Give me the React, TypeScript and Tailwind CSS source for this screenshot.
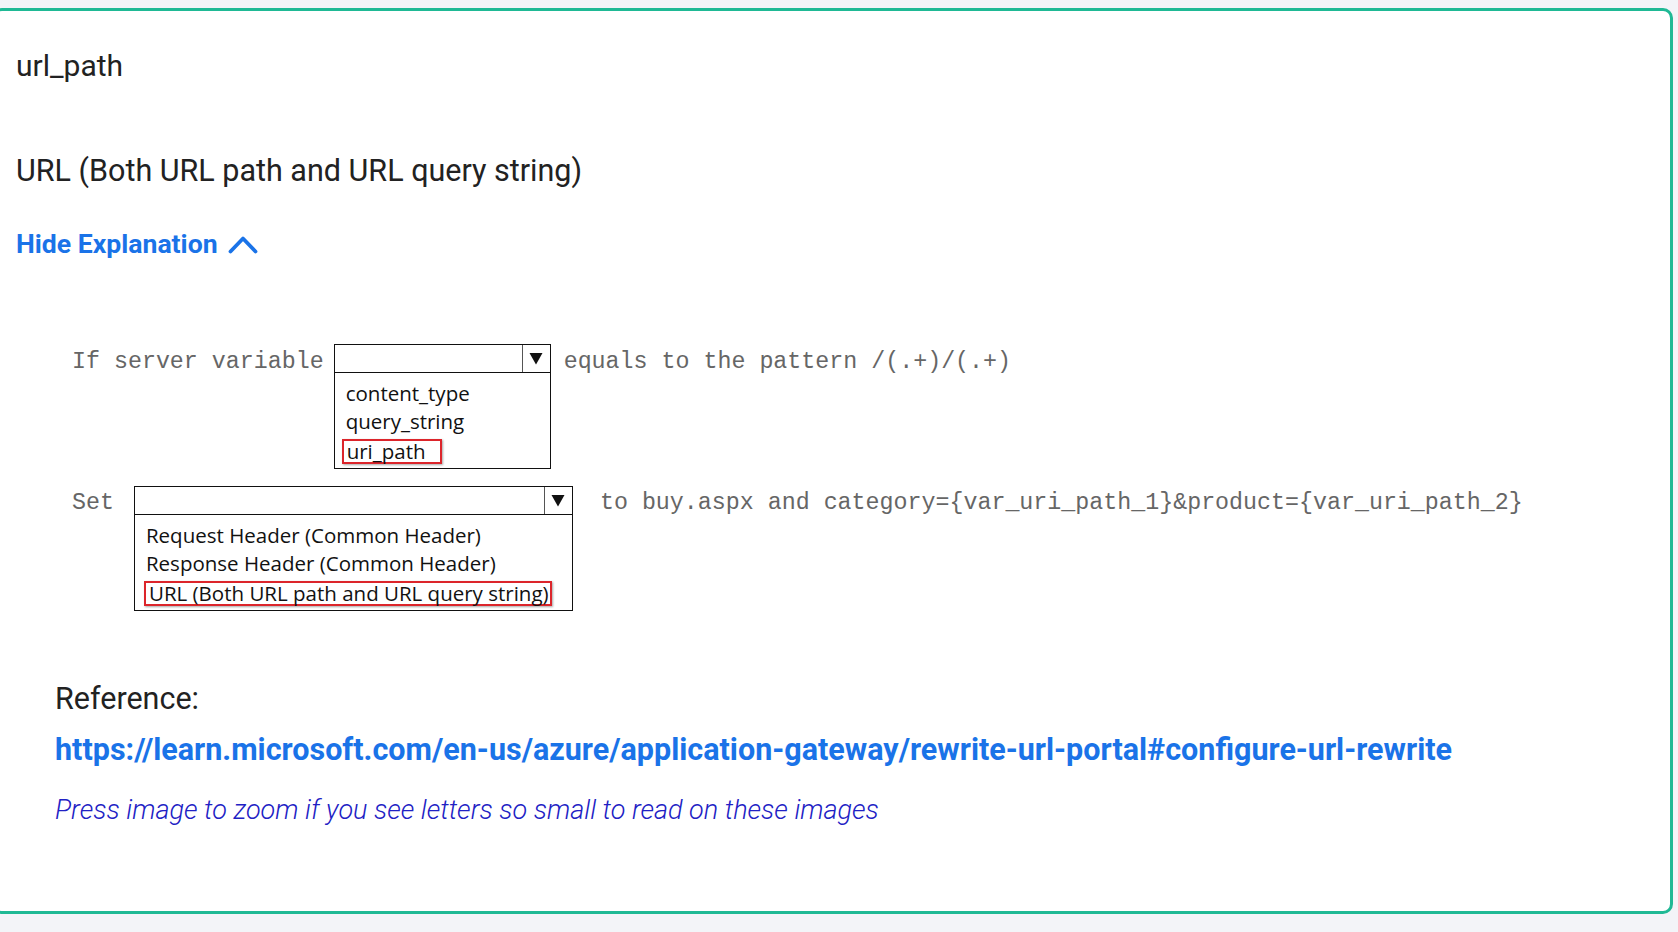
function Dropdown({
  width,
  items,
  picked,
  pickWidth,
  pickInset,
}: {
  width: string
  items: string[]
  picked: number
  pickWidth: string
  pickInset: string
}) {
  return (
    <div className={`${width} border-[1.5px] border-[#111] bg-white shrink-0`}>
      <div className="flex h-[28px] border-b-[1.5px] border-[#111]">
        <div className="flex-1" />
        <div className="w-[28px] border-l border-[#555] flex items-center justify-center">
          <svg width="14" height="13" viewBox="0 0 14 13">
            <polygon points="0.5,1 13.5,1 7,12.5" fill="#111" />
          </svg>
        </div>
      </div>
      <div className="pt-[6px] pb-[4px] font-['Open_Sans',sans-serif] text-[20.5px] text-[#111] leading-[28px]">
        {items.map((item, i) =>
          i === picked ? (
            <div key={item} className={pickInset}>
              <span
                className={`${pickWidth} inline-block border-2 border-[#dc252b] pl-[3px] leading-[21px] align-middle shadow-[1px_1px_2px_rgba(0,0,0,0.35)]`}
              >
                {item}
              </span>
            </div>
          ) : (
            <div key={item} className="pl-[11px]">
              {item}
            </div>
          )
        )}
      </div>
    </div>
  )
}

export default function App() {
  return (
    <div className="h-[932px] overflow-hidden bg-[#f3f4f8] pt-[8px] font-['Roboto',sans-serif]">
      <div className="-ml-[8px] mr-[5px] h-[906px] rounded-[10px] border-[3px] border-[#1fb995] bg-white pl-[21px] pt-[37px]">
        <p className="text-[30px] leading-[36px] text-[#222]">url_path</p>
        <p className="mt-[69px] text-[30.5px] leading-[36px] text-[#222]">
          URL (Both URL path and URL query string)
        </p>
        <button className="mt-[39px] flex h-[32px] items-center gap-[10px] text-[26.6px] font-bold leading-[32px] text-[#1a73e8]">
          Hide Explanation
          <svg width="30" height="19" viewBox="0 0 30 19" fill="none">
            <polyline
              points="2.5,16.5 15,3.5 27.5,16.5"
              stroke="#1a73e8"
              strokeWidth="3.8"
              strokeLinecap="round"
              strokeLinejoin="round"
            />
          </svg>
        </button>

        <div className="ml-[56px] mt-[84px] font-['Liberation_Mono',monospace] text-[23.3px] text-[#666]">
          <div className="flex items-start">
            <span className="leading-[36px] whitespace-pre">If server variable</span>
            <div className="ml-[10px]">
              <Dropdown
                width="w-[217px]"
                items={['content_type', 'query_string', 'uri_path']}
                picked={2}
                pickWidth="w-[100px]"
                pickInset="pl-[7px]"
              />
            </div>
            <span className="ml-[13px] leading-[36px] whitespace-pre">equals to the pattern /(.+)/(.+)</span>
          </div>
          <div className="mt-[17px] flex items-start">
            <span className="leading-[34px]">Set</span>
            <div className="ml-[20px]">
              <Dropdown
                width="w-[439px]"
                items={[
                  'Request Header (Common Header)',
                  'Response Header (Common Header)',
                  'URL (Both URL path and URL query string)',
                ]}
                picked={2}
                pickWidth="w-[408px]"
                pickInset="pl-[9px]"
              />
            </div>
            <span className="ml-[27px] leading-[34px] whitespace-pre">
              to buy.aspx and category={'{'}var_uri_path_1{'}'}&amp;product={'{'}var_uri_path_2{'}'}
            </span>
          </div>
        </div>

        <div className="ml-[39px] mt-[70px]">
          <p className="text-[30.5px] leading-[36px] text-[#222]">Reference:</p>
          <a
            href="#"
            className="mt-[15px] block text-[30.5px] font-bold leading-[36px] text-[#1a73e8]"
          >
            https://learn.microsoft.com/en-us/azure/application-gateway/rewrite-url-portal#configure-url-rewrite
          </a>
          <p className="mt-[26px] text-[27px] italic leading-[32px] text-[#2121c4] font-light">
            Press image to zoom if you see letters so small to read on these images
          </p>
        </div>
      </div>
    </div>
  )
}
